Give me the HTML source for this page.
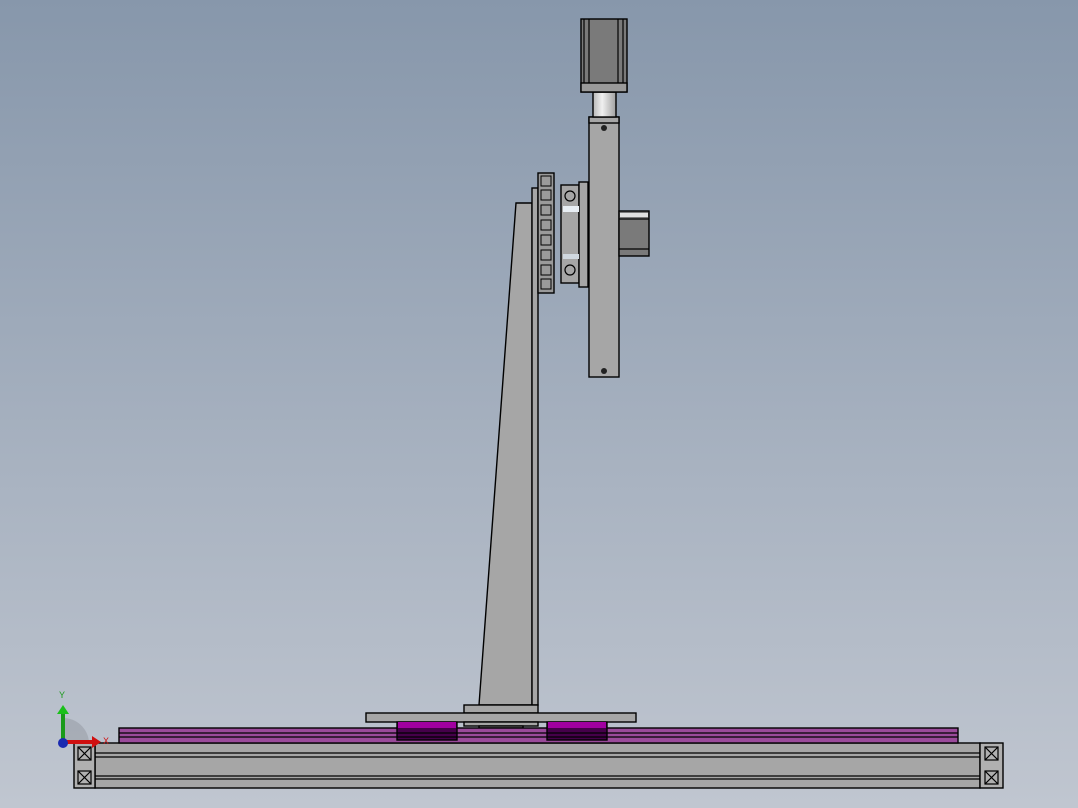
<!DOCTYPE html><html><head><style>body{margin:0}svg{display:block}</style></head><body>
<svg width="1078" height="808" viewBox="0 0 1078 808" xmlns="http://www.w3.org/2000/svg" font-family="Liberation Sans, sans-serif">
<defs><linearGradient id="bg" x1="0" y1="0" x2="0" y2="1"><stop offset="0" stop-color="#8797ab"/><stop offset="1" stop-color="#c0c6d0"/></linearGradient>
<linearGradient id="cp" x1="0" y1="0" x2="1" y2="0"><stop offset="0" stop-color="#b8b8b8"/><stop offset=".4" stop-color="#f0f0f0"/><stop offset="1" stop-color="#a0a0a0"/></linearGradient></defs>
<rect width="1078" height="808" fill="url(#bg)"/>
<g stroke="#000" stroke-width="1.4" fill="#a6a6a6">
<path d="M516 203 L532 203 L532 705 L479 705 Z"/>
<rect x="532" y="188" width="6" height="517"/>
<rect x="538" y="173" width="16" height="120" fill="#9a9a9a"/>
<rect x="464" y="705" width="74" height="8"/>
<rect x="366" y="713" width="270" height="9"/>
<rect x="464" y="722" width="74" height="4"/>
<rect x="479" y="726" width="44" height="2"/>
<rect x="561" y="185" width="18" height="98"/>
<rect x="579" y="182" width="9" height="105"/>
<rect x="589" y="117" width="30" height="260"/>
<rect x="589" y="117" width="30" height="6"/>
<rect x="593" y="92" width="23" height="25" fill="url(#cp)"/>
<rect x="581" y="19" width="46" height="73" fill="#7a7a7a"/>
<rect x="581" y="83" width="46" height="9" fill="#9a9a9a"/>
<rect x="619" y="211" width="30" height="45" fill="#7a7a7a"/>
<rect x="95" y="743" width="885" height="45"/>
<rect x="74" y="743" width="21" height="45" fill="#b0b0b0"/>
<rect x="980" y="743" width="23" height="45" fill="#b0b0b0"/>
<rect x="119" y="728" width="839" height="15" fill="#9a4a9a"/>
<rect x="397" y="722" width="60" height="18" fill="#45004a"/>
<rect x="547" y="722" width="60" height="18" fill="#45004a"/>
</g>
<g stroke="#000" stroke-width="1.2" fill="none">
<line x1="95" y1="753" x2="980" y2="753"/><line x1="95" y1="757" x2="980" y2="757"/>
<line x1="95" y1="776" x2="980" y2="776"/><line x1="95" y1="779" x2="980" y2="779"/>
<line x1="119" y1="733" x2="958" y2="733"/><line x1="119" y1="737" x2="958" y2="737"/>
<line x1="584" y1="19" x2="584" y2="83"/><line x1="589" y1="19" x2="589" y2="83"/>
<line x1="618" y1="19" x2="618" y2="83"/><line x1="623" y1="19" x2="623" y2="83"/>
<line x1="619" y1="219" x2="649" y2="219"/><line x1="619" y1="249" x2="649" y2="249"/>
<rect x="78" y="747" width="13" height="13"/><rect x="78" y="771" width="13" height="13"/>
<rect x="985" y="747" width="13" height="13"/><rect x="985" y="771" width="13" height="13"/>
<line x1="78" y1="747" x2="91" y2="760"/><line x1="91" y1="747" x2="78" y2="760"/>
<line x1="78" y1="771" x2="91" y2="784"/><line x1="91" y1="771" x2="78" y2="784"/>
<line x1="985" y1="747" x2="998" y2="760"/><line x1="998" y1="747" x2="985" y2="760"/>
<line x1="985" y1="771" x2="998" y2="784"/><line x1="998" y1="771" x2="985" y2="784"/>
<circle cx="570" cy="196" r="5"/><circle cx="570" cy="270" r="5"/>
</g>
<rect x="398" y="722" width="58" height="6" fill="#a000a0"/>
<rect x="548" y="722" width="58" height="6" fill="#a000a0"/>
<rect x="563" y="206" width="16" height="6" fill="#e8eef4"/>
<rect x="563" y="254" width="16" height="5" fill="#d0d8e0"/>
<rect x="620" y="213" width="28" height="4" fill="#e0e0e0"/>
<g stroke="#000" stroke-width="1" fill="none">
<rect x="541" y="176" width="10" height="10"/><rect x="541" y="190" width="10" height="10"/><rect x="541" y="205" width="10" height="10"/><rect x="541" y="220" width="10" height="10"/><rect x="541" y="235" width="10" height="10"/><rect x="541" y="250" width="10" height="10"/><rect x="541" y="265" width="10" height="10"/><rect x="541" y="279" width="10" height="10"/>
</g>
<circle cx="604" cy="128" r="3" fill="#222"/><circle cx="604" cy="371" r="3" fill="#222"/>
<path d="M63 742 L63 718 A26 26 0 0 1 89 742 Z" fill="#9a9ea6" opacity=".6"/>
<rect x="61" y="712" width="4" height="30" fill="#1a9a1a"/><path d="M57 714 L63 705 L69 714Z" fill="#1ac01a"/>
<rect x="63" y="740" width="30" height="4" fill="#d01010"/><path d="M92 736 L101 742 L92 748Z" fill="#d01010"/>
<circle cx="63" cy="743" r="5" fill="#1a2ab0"/>
<text x="59" y="698" font-size="9" fill="#1a9a1a">Y</text>
<text x="103" y="744" font-size="9" fill="#d01010">X</text>
</svg>
</body></html>
